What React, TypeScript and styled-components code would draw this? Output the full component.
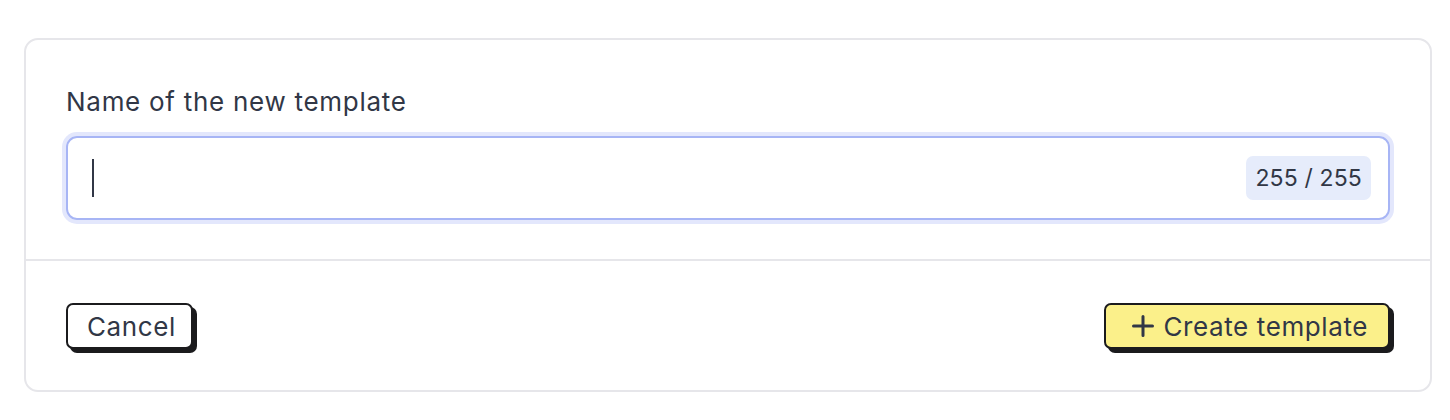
import React from "react";
import styled, { createGlobalStyle } from "styled-components";

const GlobalStyle = createGlobalStyle`
  html, body { margin: 0; padding: 0; background: #ffffff; }
  body { font-family: Inter, "Noto Sans", sans-serif; color: #313746; }
  * { box-sizing: border-box; }
`;

const Page = styled.div`
  padding: 38px 18px 0 24px;
`;

const Card = styled.div`
  border: 2px solid #e6e6ea;
  border-radius: 14px;
  background: #fff;
  display: flex;
  flex-direction: column;
`;

const Body = styled.div`
  padding: 44px 40px 39px;
  display: flex;
  flex-direction: column;
  gap: 16px;
`;

const Label = styled.label`
  font-size: 26px;
  line-height: 36px;
  letter-spacing: 0.72px;
  color: #313746;
`;

const Field = styled.div`
  height: 84px;
  border: 2px solid #a7b5f5;
  border-radius: 11px;
  box-shadow: 0 0 0 4px #e3e7fc;
  display: flex;
  align-items: center;
  justify-content: space-between;
  padding: 0 17px 0 24px;
`;

const Caret = styled.span`
  width: 2px;
  height: 38px;
  background: #313746;
`;

const Counter = styled.span`
  background: #e6ecfb;
  border-radius: 7px;
  padding: 0 9px;
  height: 44px;
  display: flex;
  align-items: center;
  font-size: 23px;
  letter-spacing: 0.15px;
  color: #313746;
`;

const Divider = styled.hr`
  margin: 0;
  border: none;
  border-top: 2px solid #e6e6ea;
`;

const Footer = styled.div`
  padding: 42px 40px 41px;
  display: flex;
  justify-content: space-between;
  align-items: center;
`;

const Button = styled.button<{ $primary?: boolean }>`
  height: 46px;
  border: 2px solid #1b1b1d;
  border-radius: 7px;
  box-shadow: 4px 4px 0 0 #1b1b1d;
  background: ${(p) => (p.$primary ? "#fbf08a" : "#ffffff")};
  font-family: Inter, "Noto Sans", sans-serif;
  font-size: 26px;
  letter-spacing: 0.6px;
  color: #313746;
  display: flex;
  align-items: center;
  gap: 10px;
  padding: ${(p) => (p.$primary ? "0 20px 0 26px" : "0 15px 0 19px")};
  cursor: pointer;
`;

const PlusIcon = () => (
  <svg width="22" height="22" viewBox="0 0 22 22" fill="none">
    <path d="M11 1.5v19M1.5 11h19" stroke="#313746" strokeWidth="3" strokeLinecap="round" />
  </svg>
);

export default function App() {
  return (
    <>
      <GlobalStyle />
      <Page>
        <Card>
          <Body>
            <Label>Name of the new template</Label>
            <Field>
              <Caret />
              <Counter>255 / 255</Counter>
            </Field>
          </Body>
          <Divider />
          <Footer>
            <Button>Cancel</Button>
            <Button $primary>
              <PlusIcon />
              Create template
            </Button>
          </Footer>
        </Card>
      </Page>
    </>
  );
}
